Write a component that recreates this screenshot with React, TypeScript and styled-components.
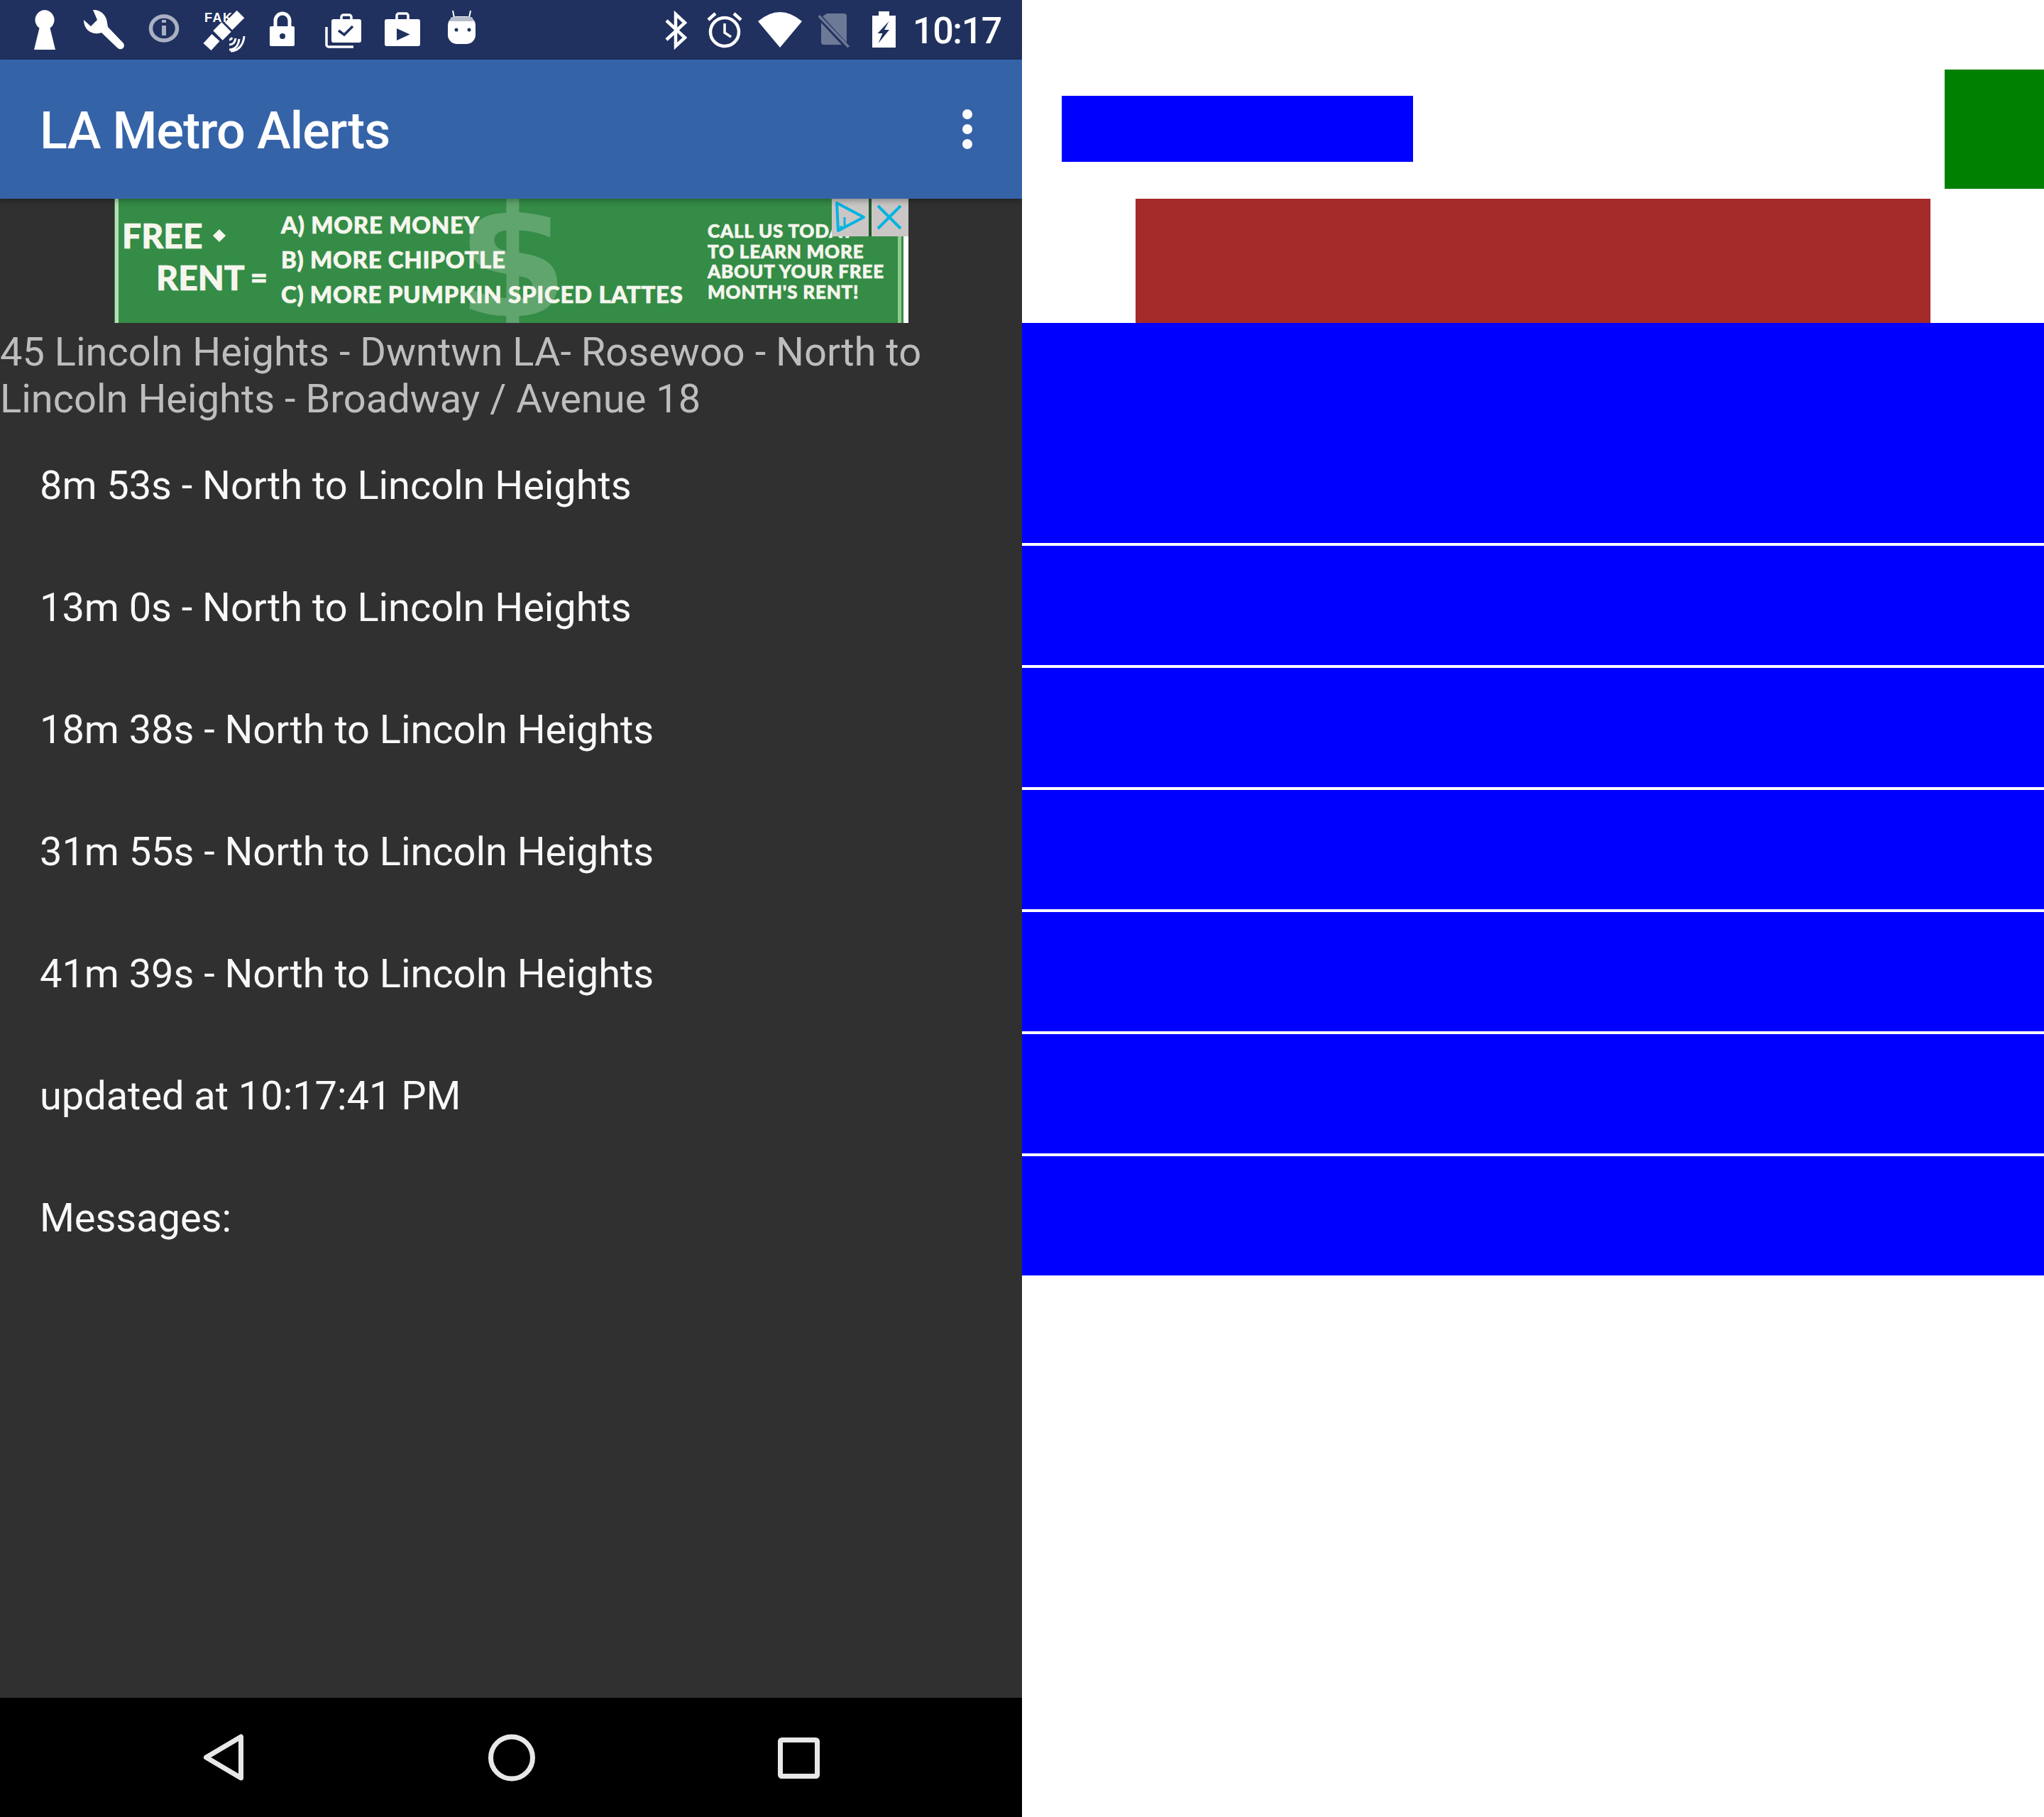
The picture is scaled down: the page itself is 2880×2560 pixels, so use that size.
import React from "react";
import styled, { createGlobalStyle } from "styled-components";

const Global = createGlobalStyle`
  html, body { margin: 0; padding: 0; background: #fff; }
  * { box-sizing: border-box; }
`;

const BAR = "#20315f";
const ICON = "#fff";

const Page = styled.div`
  width: 2880px;
  height: 2560px;
  display: flex;
  font-family: Roboto, "Liberation Sans", sans-serif;
`;

const Phone = styled.div`
  width: 1440px;
  height: 2560px;
  display: flex;
  flex-direction: column;
  background: #303030;
  overflow: hidden;
`;

const StatusBar = styled.div`
  height: 84px;
  flex: none;
  display: flex;
  justify-content: space-between;
  padding: 0 29px 0 48px;
  background: ${BAR};
`;

const StatusGroup = styled.div`
  display: flex;
`;

const Slot = styled.svg<{ $w: number }>`
  display: block;
  width: ${(p) => p.$w}px;
  height: 84px;
  flex: none;
`;

const Clock = styled.div`
  width: 126px;
  text-align: right;
  color: #fff;
  font-size: 52px;
  font-weight: 500;
  letter-spacing: -1.4px;
  line-height: 84px;
  padding-top: 2px;
`;

const AppBar = styled.header`
  position: relative;
  z-index: 2;
  height: 196px;
  flex: none;
  display: flex;
  align-items: center;
  justify-content: space-between;
  padding: 6px 70px 0 56px;
  background: #3563a8;
  box-shadow: 0 3px 8px rgba(0, 0, 0, 0.3);
`;

const Title = styled.h1`
  margin: 0;
  color: #fff;
  font-size: 72px;
  font-weight: 500;
  letter-spacing: -0.9px;
  line-height: 84px;
`;

const Overflow = styled.div`
  display: flex;
  flex-direction: column;
  gap: 7px;
  margin-top: -6px;
`;

const Dot = styled.span`
  display: block;
  width: 14px;
  height: 14px;
  border-radius: 50%;
  background: #fff;
`;

const Ad = styled.div`
  position: relative;
  flex: none;
  width: 1119px;
  height: 175px;
  margin-left: 161px;
  display: flex;
  padding-left: 11px;
  overflow: hidden;
  background: #348c46;
  color: #f6f6ee;
  font-family: Lato, "Open Sans", sans-serif;
  font-weight: 900;
  white-space: nowrap;
  -webkit-text-stroke: 0.7px #f6f6ee;

  &::before {
    content: "";
    position: absolute;
    left: 1px;
    top: 0;
    bottom: 0;
    width: 5px;
    background: #b9dcb8;
  }
  &::after {
    content: "";
    position: absolute;
    right: 0;
    top: 0;
    bottom: 0;
    width: 15px;
    background: linear-gradient(to right, #8fca8c 0 5px, #348c46 5px 8px, #fff 8px);
  }
`;

const Watermark = styled.span`
  position: absolute;
  left: 483px;
  top: 0;
  font-family: "DejaVu Sans", sans-serif;
  font-size: 225px;
  font-weight: 700;
  line-height: 175px;
  color: rgba(255, 255, 255, 0.22);
  -webkit-text-stroke: 0;
`;

const Slogan = styled.div`
  position: relative;
  width: 224px;
  flex: none;
  padding-top: 22px;
  font-size: 48px;
  line-height: 59px;
`;

const SloganLine = styled.div<{ $indent?: number }>`
  display: flex;
  align-items: center;
  padding-left: ${(p) => p.$indent ?? 0}px;
`;

const Diamond = styled.span`
  width: 16px;
  height: 16px;
  margin-left: 16px;
  background: #f6f6ee;
  transform: rotate(45deg) scale(0.8);
`;

const EqualSign = styled.span`
  margin-left: 8px;
  font-size: 42px;
`;

const Choices = styled.div`
  position: relative;
  width: 601px;
  flex: none;
  padding-top: 12px;
  font-size: 33px;
  letter-spacing: 0.7px;
  line-height: 49px;
`;

const Call = styled.div`
  position: relative;
  padding-top: 31px;
  font-size: 26px;
  letter-spacing: 0.8px;
  line-height: 28.5px;
`;

const AdBadges = styled.div`
  position: absolute;
  z-index: 1;
  top: 0;
  right: 0;
  display: flex;
  gap: 4px;
  background: #1f5a2b;
`;

const Badge = styled.svg`
  display: block;
  width: 52px;
  height: 53px;
  background: #cbc6c6;
`;

const Route = styled.div`
  flex: none;
  padding-top: 8px;
  color: #bdbdbd;
  font-size: 56px;
  line-height: 66px;
`;

const Arrivals = styled.ul`
  flex: 1;
  margin: 0;
  padding: 3px 0 0;
  list-style: none;
`;

const Arrival = styled.li`
  padding: 53px 56px;
  color: #f8f8f8;
  font-size: 56px;
  letter-spacing: -0.06px;
  line-height: 66px;
`;

const NavBar = styled.nav`
  height: 168px;
  flex: none;
  display: grid;
  grid-template-columns: repeat(3, 405px);
  padding-left: 113px;
  background: #000;
`;

const NavSlot = styled.svg`
  display: block;
  width: 405px;
  height: 168px;
  fill: none;
  stroke: #e8e8e8;
  stroke-width: 7;
  stroke-linejoin: round;
`;

const Wireframe = styled.div`
  width: 1440px;
  height: 2560px;
  display: flex;
  flex-direction: column;
  background: #fff;
`;

const Toolbar = styled.div`
  height: 280px;
  padding-top: 84px;
  display: flex;
  align-items: center;
  justify-content: space-between;
  flex: none;
`;

const TitleBox = styled.div`
  width: 495px;
  height: 93px;
  margin: -1px 0 0 56px;
  background: #0000ff;
`;

const MenuBox = styled.div`
  width: 140px;
  height: 168px;
  background: #008000;
`;

const AdBox = styled.div`
  width: 1120px;
  height: 175px;
  margin-left: 160px;
  flex: none;
  background: #a52a2a;
`;

const Rows = styled.div`
  display: flex;
  flex-direction: column;
  gap: 4px;
  background: #fff;
`;

const Row = styled.div<{ $h: number }>`
  height: ${(p) => p.$h}px;
  background: #0000ff;
`;

const arrivals = [
  "8m 53s - North to Lincoln Heights",
  "13m 0s - North to Lincoln Heights",
  "18m 38s - North to Lincoln Heights",
  "31m 55s - North to Lincoln Heights",
  "41m 39s - North to Lincoln Heights",
  "updated at 10:17:41 PM",
  "Messages:",
];

const rowHeights = [310, 168, 168, 168, 168, 168, 168];

function StatusLeft() {
  return (
    <StatusGroup>
      <Slot $w={66} viewBox="48 0 66 84">
        <path fill={ICON} d="M63 14a14 14 0 0 1 7.5 25.5L78 70H48l7.5-30.5A14 14 0 0 1 63 14Z" />
      </Slot>
      <Slot $w={92} viewBox="114 0 92 84">
        <path fill={ICON} d="M131 14c9-1 19 6 20 18l1 6 22 23c3 5-2 11-8 7l-23-22c-11 4-25-2-25-18l10 9 9-9Z" />
      </Slot>
      <Slot $w={76} viewBox="206 0 76 84">
        <g opacity="0.62" fill="none" stroke={ICON}>
          <ellipse cx="231" cy="40" rx="18.5" ry="17" strokeWidth="5.5" />
          <path d="M231 36v14" strokeWidth="6" />
          <path d="M231 28v4" strokeWidth="6" />
        </g>
      </Slot>
      <Slot $w={94} viewBox="282 0 94 84">
        <text x="288" y="31" fill={ICON} fontFamily="Liberation Sans" fontWeight="700" fontSize="18" letterSpacing="1.5">FAK</text>
        <g stroke={ICON} fill="none">
          <path d="M339 20 322 37" strokeWidth="15" />
          <path d="M319 38 307 50" strokeWidth="19" />
          <path d="M304 53 292 66" strokeWidth="15" />
          <path d="M323 70c8 0 13-6 14-15M323 63c5 0 8-3 9-9M323 56c2 0 3-1 4-3M325 72c10 0 18-8 19-21" strokeWidth="3" />
        </g>
      </Slot>
      <Slot $w={78} viewBox="376 0 78 84">
        <rect x="380" y="37" width="35" height="28" rx="2" fill={ICON} />
        <path d="M388 38v-9a10 10 0 0 1 20 0v9" fill="none" stroke={ICON} strokeWidth="5" />
        <circle cx="398" cy="51" r="4" fill={BAR} />
      </Slot>
      <Slot $w={84} viewBox="454 0 84 84">
        <rect x="467" y="27" width="42" height="33" rx="3" fill={ICON} />
        <path d="M481 28v-4a3 3 0 0 1 3-3h8a3 3 0 0 1 3 3v4" fill="none" stroke={ICON} strokeWidth="3.5" />
        <path d="M460 38v25a3 3 0 0 0 3 3h35" fill="none" stroke={ICON} strokeWidth="3.5" />
        <path d="M477 43l8 6 12-12" fill="none" stroke={BAR} strokeWidth="3.5" />
      </Slot>
      <Slot $w={89} viewBox="538 0 89 84">
        <rect x="542" y="27" width="50" height="38" rx="3" fill={ICON} />
        <path d="M559 28v-6a3 3 0 0 1 3-3h10a3 3 0 0 1 3 3v6" fill="none" stroke={ICON} strokeWidth="3.5" />
        <path d="M559 40l18.500 8.500L559 57Z" fill={BAR} />
      </Slot>
      <Slot $w={53} viewBox="627 0 53 84">
        <path d="M638 15l2 10M663 15l-2 10" stroke={ICON} strokeWidth="2" />
        <rect x="631" y="23" width="39" height="39" rx="13" fill={ICON} />
        <path d="M636 24h29l3 6h-35Z" fill="#b5bccb" />
        <circle cx="643" cy="42" r="2.500" fill={BAR} />
        <circle cx="661" cy="42" r="2.500" fill={BAR} />
      </Slot>
    </StatusGroup>
  );
}

function StatusRight() {
  return (
    <StatusGroup>
      <Slot $w={60} viewBox="930 0 60 84">
        <path d="M939 29l26 24-13 12V20l13 12-26 24" fill="none" stroke={ICON} strokeWidth="4.500" />
      </Slot>
      <Slot $w={72} viewBox="990 0 72 84">
        <g fill="none" stroke={ICON}>
          <ellipse cx="1021" cy="45" rx="20" ry="20" strokeWidth="4.500" />
          <path d="M1021 33v13l9 6" strokeWidth="3.500" />
          <path d="M998 28l10-9M1044 28l-10-9" strokeWidth="4.500" />
        </g>
      </Slot>
      <Slot $w={84} viewBox="1062 0 84 84">
        <path fill={ICON} d="M1099 67 1068 30q31-26 62 0Z" />
      </Slot>
      <Slot $w={79} viewBox="1146 0 79 84">
        <g opacity="0.35" fill={ICON}>
          <path d="M1165 19h24a4 4 0 0 1 4 4v37l-34-37Z" />
          <path d="M1157 32l29 31h-25a4 4 0 0 1-4-4Z" />
          <path d="M1155 21l42 44-2.500 2.500-42-44Z" />
        </g>
      </Slot>
      <Slot $w={60} viewBox="1225 0 60 84">
        <path fill={ICON} d="M1238 16h15v6h9v45h-33V22h9Z" />
        <path fill={BAR} d="M1252.500 30 1236.500 47h7l-6 14 15.500-19h-7Z" />
      </Slot>
      <Clock>10:17</Clock>
    </StatusGroup>
  );
}

export default function App() {
  return (
    <Page>
      <Global />
      <Phone>
        <StatusBar>
          <StatusLeft />
          <StatusRight />
        </StatusBar>
        <AppBar>
          <Title>LA Metro Alerts</Title>
          <Overflow>
            <Dot />
            <Dot />
            <Dot />
          </Overflow>
        </AppBar>
        <Ad>
          <Watermark>$</Watermark>
          <Slogan>
            <SloganLine>FREE<Diamond /></SloganLine>
            <SloganLine $indent={48}>RENT<EqualSign>=</EqualSign></SloganLine>
          </Slogan>
          <Choices>
            <div>A) MORE MONEY</div>
            <div>B) MORE CHIPOTLE</div>
            <div>C) MORE PUMPKIN SPICED LATTES</div>
          </Choices>
          <Call>
            <div>CALL US TODAY</div>
            <div>TO LEARN MORE</div>
            <div>ABOUT YOUR FREE</div>
            <div>MONTH'S RENT!</div>
          </Call>
          <AdBadges>
            <Badge viewBox="0 0 52 53">
              <path d="M7 6l38 20-36 19Z" fill="none" stroke="#00b4e0" strokeWidth="4" strokeLinejoin="round" />
              <path d="M18 26v14" stroke="#00b4e0" strokeWidth="3" />
              <circle cx="13" cy="40" r="2" fill="#00b4e0" />
            </Badge>
            <Badge viewBox="0 0 52 53">
              <path d="M9 10l32 32M41 10 9 42" fill="none" stroke="#00b4e0" strokeWidth="4" />
            </Badge>
          </AdBadges>
        </Ad>
        <Route>45 Lincoln Heights - Dwntwn LA- Rosewoo - North to Lincoln Heights - Broadway / Avenue 18</Route>
        <Arrivals>
          {arrivals.map((a) => (
            <Arrival key={a}>{a}</Arrival>
          ))}
        </Arrivals>
        <NavBar>
          <NavSlot viewBox="113 2392 405 168">
            <path d="M290.500 2476 339.500 2447v58Z" />
          </NavSlot>
          <NavSlot viewBox="518 2392 405 168">
            <circle cx="721" cy="2476.500" r="29.500" />
          </NavSlot>
          <NavSlot viewBox="923 2392 405 168">
            <rect x="1099.500" y="2451.500" width="52" height="51" rx="2" />
          </NavSlot>
        </NavBar>
      </Phone>
      <Wireframe>
        <Toolbar>
          <TitleBox />
          <MenuBox />
        </Toolbar>
        <AdBox />
        <Rows>
          {rowHeights.map((h, i) => (
            <Row key={i} $h={h} />
          ))}
        </Rows>
      </Wireframe>
    </Page>
  );
}
